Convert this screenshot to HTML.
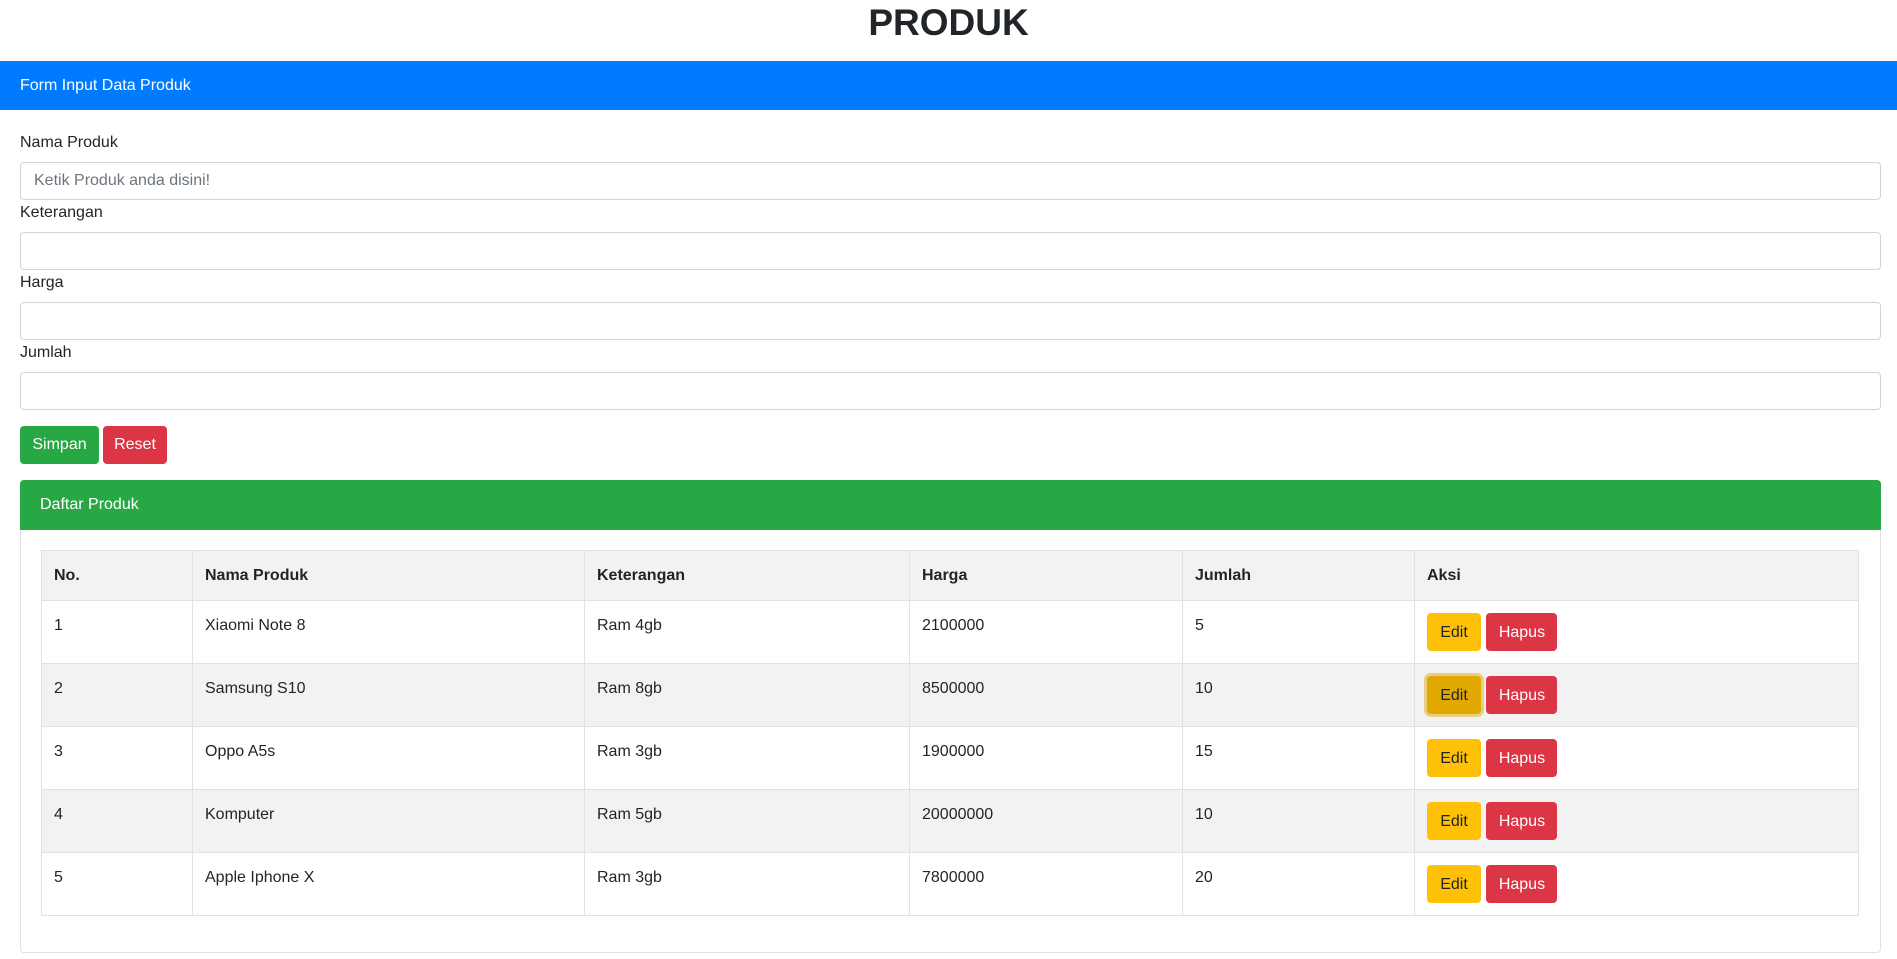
<!DOCTYPE html>
<html><head><meta charset="utf-8"><style>
*{box-sizing:border-box;margin:0;padding:0}
body{width:1897px;height:959px;overflow:hidden;background:#fff;font-family:"Liberation Sans",sans-serif;font-size:16px;color:#212529;position:relative}
.a{position:absolute}
h1{position:absolute;left:0;width:1897px;top:1px;text-align:center;font-size:37px;font-weight:bold;line-height:44px;color:#212529}
.bar{left:0;width:1897px;top:61px;height:49px;background:#007bff;color:#fff;padding-left:20px;line-height:49px;font-size:16px}
.lbl{left:20px;font-size:16px}
.inp{left:20px;width:1861px;height:38px;border:1px solid #ced4da;border-radius:4px;padding-left:13px;line-height:36px;color:#6c757d;font-size:16px}
.btn{height:38px;border-radius:4px;color:#fff;text-align:center;line-height:38px;font-size:16px}
.card{left:20px;top:480px;width:1861px;height:473px;border:1px solid #dee2e6;border-radius:4px}
.ch{left:20px;top:480px;width:1861px;height:50px;background:#28a745;color:#fff;padding-left:20px;line-height:50px;font-size:16px;border-radius:4px 4px 0 0}
table{position:absolute;left:41px;top:550px;width:1818px;border-collapse:collapse;font-size:16px}
td,th{border:1px solid #dee2e6;text-align:left;vertical-align:top;padding:16px 12px 0}
th{height:50px;font-weight:bold;background:#f2f2f2}
td{height:63px}
tr.g td{background:#f2f2f2}
.e,.h{display:inline-block;height:38px;line-height:39px;border-radius:4px;font-size:16px;margin-top:-4px;text-align:center}
.e{width:54px;background:#ffc107;color:#212529;margin-left:0}
.h{width:71px;background:#dc3545;color:#fff;margin-left:1px}
.f{background:#e0a800;box-shadow:0 0 0 3px rgba(222,170,12,.5)}
</style></head><body>
<h1>PRODUK</h1>
<div class="a bar">Form Input Data Produk</div>
<div class="a lbl" style="top:134px">Nama Produk</div>
<div class="a inp" style="top:162px">Ketik Produk anda disini!</div>
<div class="a lbl" style="top:204px">Keterangan</div>
<div class="a inp" style="top:232px"></div>
<div class="a lbl" style="top:274px">Harga</div>
<div class="a inp" style="top:302px"></div>
<div class="a lbl" style="top:344px">Jumlah</div>
<div class="a inp" style="top:372px"></div>
<div class="a btn" style="left:20px;top:426px;width:79px;background:#28a745">Simpan</div>
<div class="a btn" style="left:103px;top:426px;width:64px;background:#dc3545">Reset</div>
<div class="a card"></div>
<div class="a ch">Daftar Produk</div>
<table>
<colgroup><col style="width:151px"><col style="width:392px"><col style="width:325px"><col style="width:273px"><col style="width:232px"><col></colgroup>
<tr><th>No.</th><th>Nama Produk</th><th>Keterangan</th><th>Harga</th><th>Jumlah</th><th>Aksi</th></tr>
<tr><td>1</td><td>Xiaomi Note 8</td><td>Ram 4gb</td><td>2100000</td><td>5</td><td><span class="e">Edit</span> <span class="h">Hapus</span></td></tr>
<tr class="g"><td>2</td><td>Samsung S10</td><td>Ram 8gb</td><td>8500000</td><td>10</td><td><span class="e f">Edit</span> <span class="h">Hapus</span></td></tr>
<tr><td>3</td><td>Oppo A5s</td><td>Ram 3gb</td><td>1900000</td><td>15</td><td><span class="e">Edit</span> <span class="h">Hapus</span></td></tr>
<tr class="g"><td>4</td><td>Komputer</td><td>Ram 5gb</td><td>20000000</td><td>10</td><td><span class="e">Edit</span> <span class="h">Hapus</span></td></tr>
<tr><td>5</td><td>Apple Iphone X</td><td>Ram 3gb</td><td>7800000</td><td>20</td><td><span class="e">Edit</span> <span class="h">Hapus</span></td></tr>
</table>
</body></html>
